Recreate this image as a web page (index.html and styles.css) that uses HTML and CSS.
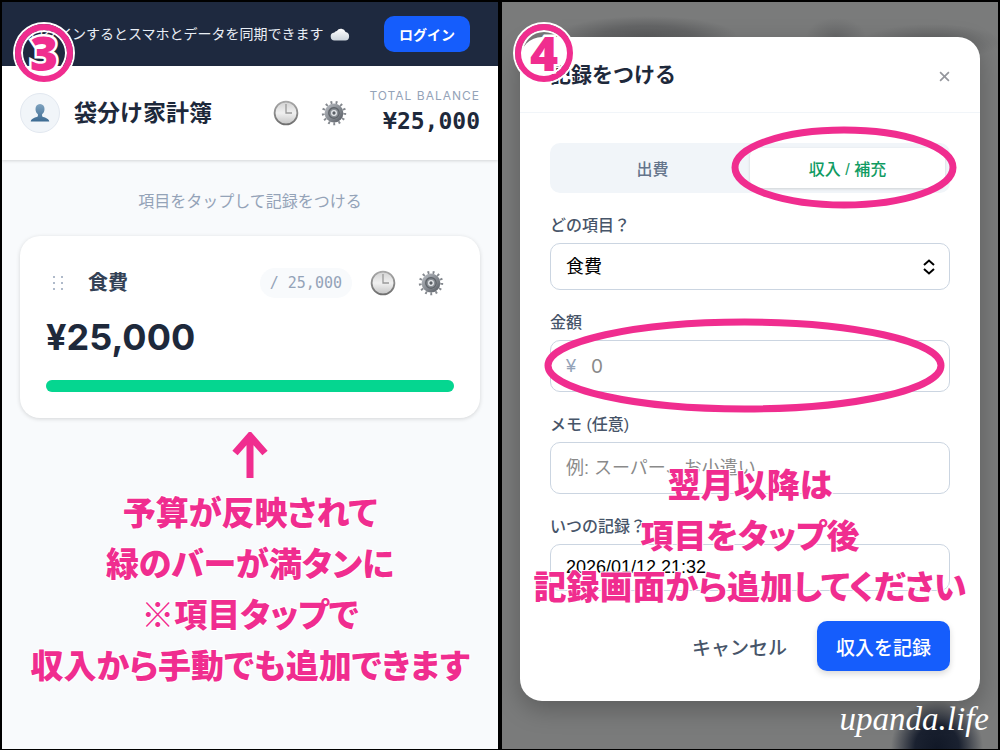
FILE: index.html
```html
<!DOCTYPE html>
<html lang="ja">
<head>
  <meta charset="UTF-8">
  <meta name="viewport" content="width=device-width, initial-scale=1.0">
  <title>袋分け家計簿</title>
  <link rel="stylesheet" href="styles.css">
</head>
<body>
  <!-- Shared icons -->
  <svg class="defs" width="0" height="0" aria-hidden="true">
    <defs>
      <linearGradient id="clockFace" x1="0" y1="0" x2="0" y2="1">
        <stop offset="0" stop-color="#d2d2d2"/>
        <stop offset="0.5" stop-color="#f0f0f0"/>
        <stop offset="1" stop-color="#c4c4c4"/>
      </linearGradient>
      <linearGradient id="clockRim" x1="0" y1="0" x2="0" y2="1">
        <stop offset="0" stop-color="#a8a8a8"/>
        <stop offset="1" stop-color="#6f6f6f"/>
      </linearGradient>
      <linearGradient id="metal" x1="0" y1="0" x2="1" y2="1">
        <stop offset="0" stop-color="#b4b8be"/>
        <stop offset="1" stop-color="#5c6168"/>
      </linearGradient>
      <linearGradient id="bust" x1="0" y1="0" x2="0" y2="1">
        <stop offset="0" stop-color="#7fa3bf"/>
        <stop offset="1" stop-color="#3c6a92"/>
      </linearGradient>
      <linearGradient id="cloudFill" x1="0" y1="0" x2="0" y2="1">
        <stop offset="0" stop-color="#ffffff"/>
        <stop offset="1" stop-color="#cbd3db"/>
      </linearGradient>
    </defs>
    <symbol id="clock" viewBox="0 0 26 26">
      <circle cx="13" cy="13" r="11.4" fill="url(#clockFace)" stroke="url(#clockRim)" stroke-width="1.8"/>
      <path d="M13 4v9h6" fill="none" stroke="#999" stroke-width="1.3"/>
    </symbol>
    <symbol id="gear" viewBox="0 0 26 26">
      <circle cx="13" cy="13" r="10.8" fill="none" stroke="#85898f" stroke-width="2.8" stroke-dasharray="1.9 3.320"/>
      <circle cx="13" cy="13" r="7.8" fill="#8d9197" stroke="url(#metal)" stroke-width="3.2"/>
      <circle cx="13" cy="13" r="5.2" fill="#8b9096" stroke="#5f646a" stroke-width="1.4"/>
      <circle cx="13" cy="13" r="2.3" fill="#5b6066" stroke="#e8eaed" stroke-width="1.3"/>
    </symbol>
  </svg>

  <main class="board">
    <!-- Step 3: home screen -->
    <section class="panel home">
      <div class="sync-bar">
        <span class="sync-text">ログインするとスマホとデータを同期できます
          <svg class="cloud" viewBox="0 0 20 14" aria-hidden="true">
            <path d="M5 13.5a4 4 0 0 1-.6-8 3 3 0 0 1 2.4-1.600A5 5 0 0 1 15.600 5 4.300 4.300 0 0 1 15.300 13.500z" fill="url(#cloudFill)"/>
          </svg>
        </span>
        <button class="login-button" type="button">ログイン</button>
      </div>

      <header class="app-header">
        <div class="avatar">
          <svg viewBox="0 0 20 20" aria-hidden="true">
            <path d="M10 1c3 0 4.500 2.200 4.500 4.900 0 2.300-1 4.300-2.400 5.300v2c0 1 6.900 1.400 7.200 5.300H.7c.3-3.900 7.200-4.300 7.200-5.300v-2C6.500 10.200 5.500 8.200 5.500 5.900 5.500 3.200 7 1 10 1z" fill="url(#bust)"/>
          </svg>
        </div>
        <h1 class="app-title">袋分け家計簿</h1>
        <div class="icon-group">
          <button class="icon-button" type="button" aria-label="履歴"><svg><use href="#clock"/></svg></button>
          <button class="icon-button" type="button" aria-label="設定"><svg><use href="#gear"/></svg></button>
        </div>
        <div class="total">
          <div class="total-label">TOTAL BALANCE</div>
          <div class="total-value">¥25,000</div>
        </div>
      </header>

      <p class="hint">項目をタップして記録をつける</p>

      <article class="card">
        <div class="card-top">
          <svg class="handle" viewBox="0 0 12 16" aria-hidden="true">
            <g fill="#94a3b8">
              <circle cx="2" cy="2" r="1"/><circle cx="10" cy="2" r="1"/>
              <circle cx="2" cy="8" r="1"/><circle cx="10" cy="8" r="1"/>
              <circle cx="2" cy="14" r="1"/><circle cx="10" cy="14" r="1"/>
            </g>
          </svg>
          <h2 class="card-title">食費</h2>
          <span class="budget">/ 25,000</span>
          <div class="icon-group">
            <button class="icon-button" type="button" aria-label="履歴"><svg><use href="#clock"/></svg></button>
            <button class="icon-button" type="button" aria-label="設定"><svg><use href="#gear"/></svg></button>
          </div>
        </div>
        <div class="amount">¥25,000</div>
        <div class="bar"><div class="fill" style="width: 100%"></div></div>
      </article>

      <svg class="arrow" viewBox="0 0 36 46" aria-hidden="true">
        <path d="M18 46V5M3 21L18 4l15 17" fill="none" stroke="#f02d8f" stroke-width="7"/>
      </svg>
      <p class="caption">予算が反映されて<br>緑のバーが満タンに<br>※項目タップで<br>収入から手動でも追加できます</p>

      <div class="step">3</div>
    </section>

    <!-- Step 4: record dialog -->
    <section class="panel record">
      <form class="modal">
        <header class="modal-header">
          <h2 class="modal-title">記録をつける</h2>
          <button class="close-button" type="button" aria-label="閉じる">
            <svg viewBox="0 0 10 10"><path d="M1 1l8 8M9 1L1 9" stroke="#94969c" stroke-width="1.500"/></svg>
          </button>
        </header>
        <div class="modal-body">
          <div class="tabs">
            <button class="tab" type="button">出費</button>
            <button class="tab active" type="button">収入 / 補充
              <svg class="ring ring-tab" viewBox="0 0 100 100" preserveAspectRatio="none" aria-hidden="true"><ellipse cx="50" cy="50" rx="50" ry="50"/></svg>
            </button>
          </div>

          <div class="field">
            <label for="item">どの項目？</label>
            <div class="control">
              <select id="item"><option>食費</option></select>
              <svg class="chevrons" viewBox="0 0 12 16" aria-hidden="true"><path d="M1 6L6 1.500 11 6M1 10l5 4.500 5-4.500" fill="none" stroke="#000" stroke-width="2"/></svg>
            </div>
          </div>

          <div class="field">
            <label for="amount">金額</label>
            <div class="control">
              <span class="yen">¥</span>
              <input class="tall money" id="amount" type="text" inputmode="numeric" placeholder="0">
              <svg class="ring ring-amount" viewBox="0 0 100 100" preserveAspectRatio="none" aria-hidden="true"><ellipse cx="50" cy="50" rx="50" ry="50"/></svg>
            </div>
          </div>

          <div class="field">
            <label for="memo">メモ (任意)</label>
            <input class="tall" id="memo" type="text" placeholder="例: スーパー、お小遣い">
          </div>

          <div class="field">
            <label for="date">いつの記録？</label>
            <input id="date" type="text" value="2026/01/12 21:32">
          </div>

          <div class="actions">
            <button class="cancel-button" type="button">キャンセル</button>
            <button class="submit-button" type="button">収入を記録</button>
          </div>
        </div>
      </form>

      <p class="caption over">翌月以降は<br>項目をタップ後<br>記録画面から追加してください</p>
      <div class="step">4</div>
      <div class="signature">upanda.life</div>
    </section>
  </main>
</body>
</html>
```

FILE: styles.css
```css
* {
  box-sizing: border-box;
}

body {
  margin: 0;
  background-color: #000;
  font-family: "Liberation Sans", "Noto Sans CJK JP", sans-serif;
  color: #1e293b;
}

h1, h2, p {
  margin: 0;
}

button, input, select {
  font-family: inherit;
  margin: 0;
}

button {
  border: none;
  background: none;
  padding: 0;
  cursor: pointer;
}

.defs {
  position: absolute;
}

.board {
  display: grid;
  grid-template-columns: 1fr 1fr;
  gap: 4px;
  min-height: 100vh;
  padding: 2px;
}

.panel {
  position: relative;
  overflow: hidden;
}

/* Home screen */
.home {
  background-color: #f8fafc;
}

.sync-bar {
  display: flex;
  align-items: center;
  justify-content: space-between;
  height: 64px;
  padding: 0 28px;
  background-color: #1e293f;
}

.sync-text {
  display: flex;
  align-items: center;
  gap: 6px;
  font-size: 14px;
  line-height: 20px;
  color: #e9eef5;
  white-space: nowrap;
}

.cloud {
  width: 20px;
  height: 14px;
}

.login-button {
  width: 86px;
  height: 36px;
  border-radius: 10px;
  background-color: #155dfc;
  color: #fff;
  font-size: 14px;
  font-weight: bold;
}

.app-header {
  display: flex;
  align-items: center;
  height: 94px;
  padding: 0 18px;
  background-color: #fff;
  box-shadow: 0 1px 3px rgba(0, 0, 0, 0.15);
}

.avatar {
  display: flex;
  align-items: center;
  justify-content: center;
  width: 40px;
  height: 40px;
  margin-right: 14px;
  border: 1px solid #e2e8f0;
  border-radius: 50%;
  background-color: #f1f5f9;
}

.avatar svg {
  width: 20px;
  height: 20px;
}

.app-title {
  font-size: 23px;
  line-height: 32px;
  white-space: nowrap;
}

.icon-group {
  display: flex;
  gap: 22px;
  margin-left: auto;
}

.icon-button,
.icon-button svg {
  display: block;
  width: 26px;
  height: 26px;
}

.total {
  margin-left: 22px;
  text-align: right;
}

.total-label {
  font-family: Inter, sans-serif;
  font-size: 12px;
  line-height: 16px;
  letter-spacing: 1px;
  color: #94a3b8;
}

.total-value {
  font-family: "DejaVu Sans Mono", monospace;
  font-size: 23px;
  line-height: 34px;
  font-weight: bold;
}

.hint {
  padding: 30px 0 22px;
  font-size: 16px;
  line-height: 24px;
  text-align: center;
  color: #94a3b8;
}

.card {
  margin: 0 18px;
  padding: 32px 26px 26px;
  border-radius: 20px;
  background-color: #fff;
  box-shadow: 0 1px 4px rgba(0, 0, 0, 0.15);
}

.card-top {
  display: flex;
  align-items: center;
  padding: 0 10px 0 6px;
}

.handle {
  width: 12px;
  height: 16px;
  margin-right: 24px;
}

.card-title {
  font-size: 20px;
  line-height: 30px;
  color: #334155;
}

.budget {
  margin-left: auto;
  padding: 0 10px;
  border-radius: 15px;
  background-color: #f8fafc;
  font-family: "DejaVu Sans Mono", monospace;
  font-size: 15px;
  line-height: 30px;
  color: #94a3b8;
}

.card .icon-group {
  margin-left: 18px;
}

.amount {
  margin: 16px 0 20px;
  font-family: Inter, sans-serif;
  font-size: 36px;
  line-height: 46px;
  font-weight: bold;
}

.bar {
  height: 12px;
  border-radius: 6px;
  background-color: #e2e8f0;
}

.bar .fill {
  height: 100%;
  border-radius: 6px;
  background-color: #05d690;
}

/* Notes on top of the screens */
.arrow {
  display: block;
  width: 36px;
  height: 46px;
  margin: 14px auto 8px;
}

.caption {
  font-family: "Noto Sans CJK JP", sans-serif;
  font-size: 33px;
  line-height: 51px;
  font-weight: 900;
  font-feature-settings: "palt";
  text-align: center;
  white-space: nowrap;
  color: #f02d8f;
  -webkit-text-stroke: 2px #fff;
  paint-order: stroke fill;
}

.caption.over {
  position: absolute;
  top: 456px;
  left: 0;
  right: 0;
}

.step {
  position: absolute;
  top: 22px;
  left: 13px;
  width: 58px;
  height: 58px;
  border: 6px solid #f02d8f;
  border-radius: 50%;
  box-shadow: 0 0 0 2px #fff, inset 0 0 0 2px #fff;
  font-family: "Noto Sans", sans-serif;
  font-size: 48px;
  line-height: 46px;
  font-weight: 900;
  text-align: center;
  color: #f02d8f;
  -webkit-text-stroke: 5px #fff;
  paint-order: stroke fill;
}

.ring {
  position: absolute;
  overflow: visible;
  pointer-events: none;
}

.ring ellipse {
  fill: none;
  stroke: #f02d8f;
  stroke-width: 7px;
  vector-effect: non-scaling-stroke;
}

.ring-tab {
  top: -18px;
  left: -15px;
  width: calc(100% + 23px);
  height: calc(100% + 35px);
}

.ring-amount {
  top: -18px;
  left: -2px;
  width: calc(100% - 7px);
  height: calc(100% + 35px);
}

.signature {
  position: absolute;
  right: 9px;
  bottom: 10px;
  font-family: "Liberation Serif", serif;
  font-size: 33px;
  line-height: 40px;
  font-style: italic;
  color: #fff;
}

/* Record dialog */
.record {
  padding: 35px 18px 48px;
  background-color: #7a7b7b;
  background-image:
    radial-gradient(circle at 435px 745px, #111827 0, #1a2130 22px, transparent 46px),
    radial-gradient(ellipse 90px 20px at 145px 34px, #5c5d5e 0, #646566 50%, transparent 100%),
    radial-gradient(ellipse 30px 18px at 334px 34px, #68696a 0, transparent 100%),
    radial-gradient(ellipse 70px 18px at 430px 40px, #5f6061 0, transparent 100%);
}

.modal {
  border-radius: 22px;
  background-color: #fff;
  box-shadow: 0 8px 24px rgba(0, 0, 0, 0.25);
}

.modal-header {
  display: flex;
  align-items: center;
  justify-content: space-between;
  height: 76px;
  padding: 0 30px;
  border-bottom: 1px solid #f1f5f9;
}

.modal-title {
  font-size: 21px;
  line-height: 30px;
}

.close-button {
  padding-top: 4px;
}

.close-button svg {
  display: block;
  width: 11px;
  height: 11px;
}

.modal-body {
  padding: 30px;
}

.tabs {
  display: grid;
  grid-template-columns: 1fr 1fr;
  height: 50px;
  margin-bottom: 21px;
  padding: 5px;
  border-radius: 10px;
  background-color: #f1f5f9;
}

.tab {
  position: relative;
  border-radius: 8px;
  font-size: 16px;
  font-weight: 500;
  color: #64748b;
}

.tab.active {
  background-color: #fff;
  box-shadow: 0 1px 3px rgba(0, 0, 0, 0.15);
  color: #109b62;
}

.field {
  margin-bottom: 21px;
}

.field label {
  display: block;
  margin-bottom: 5px;
  font-size: 16px;
  line-height: 24px;
  font-weight: 500;
  color: #475569;
}

.control {
  position: relative;
}

.field input,
.field select {
  display: block;
  width: 100%;
  height: 47px;
  padding: 0 15px;
  border: 1px solid #cbd5e1;
  border-radius: 10px;
  background-color: #fff;
  color: #000;
  font-size: 18px;
  appearance: none;
}

.field input.tall {
  height: 52px;
}

.field input.money {
  padding-left: 40px;
  font-family: Inter, sans-serif;
  font-size: 19px;
}

.field input::placeholder {
  color: #8a8a8a;
}

.chevrons {
  position: absolute;
  top: 16px;
  right: 15px;
  width: 12px;
  height: 16px;
}

.yen {
  position: absolute;
  top: 0;
  left: 16px;
  font-size: 18px;
  line-height: 52px;
  color: #94a3b8;
}

.actions {
  display: flex;
  justify-content: flex-end;
  gap: 30px;
  padding-top: 9px;
}

.cancel-button,
.submit-button {
  height: 50px;
  font-size: 19px;
  font-weight: 500;
  color: #475569;
}

.submit-button {
  width: 133px;
  border-radius: 10px;
  background-color: #155dfc;
  box-shadow: 0 3px 6px rgba(0, 0, 0, 0.15);
  color: #fff;
}
```
